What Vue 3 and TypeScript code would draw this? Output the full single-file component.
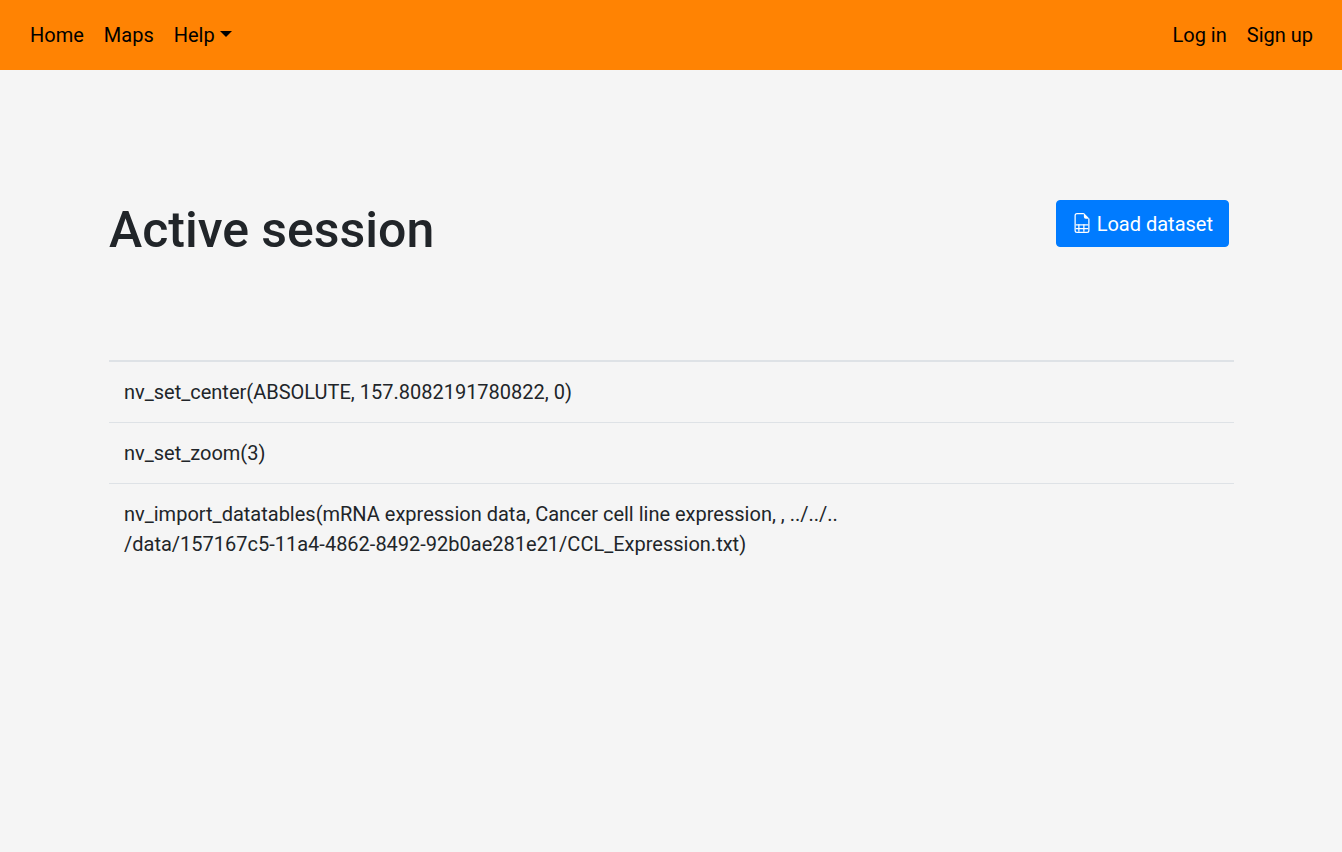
<script setup lang="ts">
interface NavEntry {
  label: string
}

const links: NavEntry[] = [{ label: 'Home' }, { label: 'Maps' }]
const accountLinks: NavEntry[] = [{ label: 'Log in' }, { label: 'Sign up' }]

// Each command is a list of chunks; a line may break between two chunks.
const commands: string[][] = [
  ['nv_set_center(ABSOLUTE, 157.8082191780822, 0)'],
  ['nv_set_zoom(3)'],
  [
    'nv_import_datatables(mRNA expression data, Cancer cell line expression, , ../../..',
    '/data/157167c5-11a4-4862-8492-92b0ae281e21/CCL_Expression.txt)',
  ],
]
</script>

<template>
  <nav class="navbar" aria-label="Main">
    <div class="nav-group">
      <a v-for="link in links" :key="link.label" class="nav-link" href="#">{{ link.label }}</a>
      <button class="nav-link nav-toggle" type="button" aria-haspopup="true">Help</button>
    </div>
    <div class="nav-group">
      <a v-for="link in accountLinks" :key="link.label" class="nav-link" href="#">{{ link.label }}</a>
    </div>
  </nav>

  <main class="container">
    <header class="heading">
      <h1>Active session</h1>
      <button class="load" type="button">
        <svg width="20" height="20" viewBox="0 0 16 16" fill="currentColor" aria-hidden="true">
          <path d="M4 0h5.500v1H4a1 1 0 0 0-1 1v12a1 1 0 0 0 1 1h8a1 1 0 0 0 1-1V4.500h1V14a2 2 0 0 1-2 2H4a2 2 0 0 1-2-2V2a2 2 0 0 1 2-2z" />
          <path d="M9.500 3V0L14 4.500h-3A1.500 1.500 0 0 1 9.500 3z" />
          <path d="M3 9h10v1H3zM3 12h10v1H3z" />
          <path d="M5 9h1v6H5zM9 9h1v6H9z" />
        </svg>
        Load dataset
      </button>
    </header>

    <table class="commands" aria-label="Session commands">
      <tbody>
        <tr v-for="(chunks, row) in commands" :key="row">
          <td><template v-for="(chunk, part) in chunks" :key="part"><wbr v-if="part > 0">{{ chunk }}</template></td>
          <td class="actions"></td>
        </tr>
      </tbody>
    </table>
  </main>
</template>

<style>
body {
  background: #f5f5f5;
}
</style>

<style scoped>
.navbar,
.container {
  box-sizing: border-box;
  font-family: Roboto, "Liberation Sans", sans-serif;
  font-size: 20px;
  line-height: 30px;
  color: #212529;
}

.navbar {
  display: flex;
  align-items: center;
  justify-content: space-between;
  padding: 10px 19px 10px 20px;
  background: #ff8303;
}

.nav-group {
  display: flex;
}

.nav-link {
  display: block;
  padding: 10px;
  color: #000;
  text-decoration: none;
}

.nav-toggle {
  border: 0;
  background: none;
  font: inherit;
  cursor: pointer;
}

.nav-toggle::after {
  content: "";
  display: inline-block;
  margin-left: 5px;
  vertical-align: 5px;
  border-top: 6px solid;
  border-right: 6px solid transparent;
  border-left: 6px solid transparent;
}

.container {
  max-width: 1154px;
  margin: 0 auto;
  padding: 130px 14px 0 15px;
}

.heading {
  display: flex;
  align-items: flex-start;
  justify-content: space-between;
  padding-right: 5px;
}

h1 {
  margin: 0;
  font-size: 50px;
  font-weight: 500;
  line-height: 60px;
}

.load {
  padding: 8px 15px 7px;
  border: 1px solid #007bff;
  border-radius: 4px;
  background: #007bff;
  color: #fff;
  font: inherit;
  cursor: pointer;
}

.load svg {
  vertical-align: -2px;
}

.commands {
  width: 100%;
  margin-top: 100px;
  border-collapse: collapse;
}

td {
  padding: 15px;
  border-top: 1px solid #dee2e6;
  vertical-align: top;
}

tr:first-child td {
  border-top-width: 2px;
}

.actions {
  width: 30%;
}
</style>
